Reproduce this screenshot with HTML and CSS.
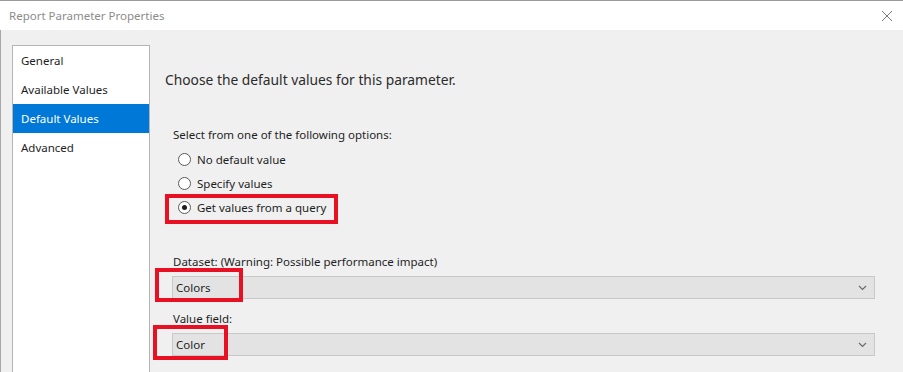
FILE: index.html
```html
<!DOCTYPE html>
<html lang="en">
<head>
  <meta charset="UTF-8" />
  <title>Report Parameter Properties</title>
  <link rel="stylesheet" href="styles.css">
</head>
<body>
  <div class="window">
    <div class="titlebar">
      <span class="title">Report Parameter Properties</span>
      <svg class="close" width="12" height="12" viewBox="0 0 12 12">
        <path d="M1 1 L11 11 M11 1 L1 11" stroke="#7a7a7a" stroke-width="1" fill="none" />
      </svg>
    </div>

    <div class="main">
      <ul class="pages">
        <li>General</li>
        <li>Available Values</li>
        <li class="active">Default Values</li>
        <li>Advanced</li>
      </ul>

      <div class="content">
        <h1>Choose the default values for this parameter.</h1>

        <div class="options">
          <p class="label">Select from one of the following options:</p>
          <label class="radio"><span class="dot"></span>No default value</label>
          <label class="radio"><span class="dot"></span>Specify values</label>
          <label class="radio"><span class="dot checked"></span>Get values from a query<span class="mark mark-radio"></span></label>
        </div>

        <div class="field first">
          <p class="label">Dataset: (Warning: Possible performance impact)</p>
          <div class="combo">
            <span>Colors</span>
            <svg class="chev" width="9" height="6" viewBox="0 0 9 6"><path d="M1 1 L4.5 4.5 L8 1" stroke="#6b6b6b" stroke-width="1.2" fill="none" /></svg>
            <span class="mark mark-dataset"></span>
          </div>
        </div>

        <div class="field">
          <p class="label">Value field:</p>
          <div class="combo">
            <span>Color</span>
            <svg class="chev" width="9" height="6" viewBox="0 0 9 6"><path d="M1 1 L4.5 4.5 L8 1" stroke="#6b6b6b" stroke-width="1.2" fill="none" /></svg>
            <span class="mark mark-value"></span>
          </div>
        </div>
      </div>
    </div>
  </div>
</body>
</html>
```

FILE: styles.css
```css
html, body {
  margin: 0;
  padding: 0;
}
body {
  width: 903px;
  height: 372px;
  overflow: hidden;
  background: #f0f0f0;
  font-family: "Noto Sans", "Open Sans", sans-serif;
  color: #1e1e1e;
}
.window {
  display: flex;
  flex-direction: column;
  height: 100%;
}
.titlebar {
  height: 29px;
  background: #fff;
  border-top: 1px solid #9b9b9b;
  display: flex;
  align-items: center;
  justify-content: space-between;
  padding: 0 10px 0 9px;
}
.title {
  font-size: 11.5px;
  color: #8c8c8c;
}
.close {
  margin-top: 1px;
}
.main {
  flex: 1;
  display: flex;
  padding-top: 15px;
  border-left: 1px solid #a8a8a8;
}
.pages {
  list-style: none;
  margin: 0 0 0 11px;
  padding: 0;
  width: 136px;
  background: #fff;
  border: 1px solid #b4b4b4;
  border-bottom: none;
  font-size: 11.5px;
}
.pages li {
  height: 29px;
  line-height: 30px;
  padding-left: 8px;
  color: #1e1e1e;
}
.pages li.active {
  background: #0078d7;
  color: #fff;
}
.content {
  flex: 1;
  padding-left: 15px;
}
h1 {
  font-size: 13.8px;
  font-weight: normal;
  color: #2b2b2b;
  margin: 25px 0 0;
  line-height: 20px;
}
.label {
  margin: 0;
  font-size: 11.5px;
  line-height: 18px;
}
.options {
  margin-top: 36px;
  padding-left: 8px;
  display: flex;
  flex-direction: column;
  align-items: flex-start;
}
.options .label {
  margin-bottom: 3px;
}
.radio {
  position: relative;
  display: flex;
  align-items: center;
  height: 24px;
  font-size: 11.5px;
  padding-left: 5px;
}
.dot {
  width: 11px;
  height: 11px;
  border: 1px solid #5a5a5a;
  border-radius: 50%;
  background: #fff;
  margin-right: 6px;
  position: relative;
}
.dot.checked::after {
  content: "";
  position: absolute;
  left: 3px;
  top: 3px;
  width: 5px;
  height: 5px;
  border-radius: 50%;
  background: #1e1e1e;
}
.field {
  margin-top: 11px;
  padding-left: 8px;
}
.field.first {
  margin-top: 34px;
}
.field .label {
  margin-bottom: 5px;
}
.combo {
  position: relative;
  margin: 0 28px 0 -1px;
  height: 21px;
  background: #e3e3e3;
  border: 1px solid #c8c8c8;
  display: flex;
  align-items: center;
  justify-content: space-between;
  padding: 0 7px 0 3px;
  font-size: 11.5px;
}
.mark {
  position: absolute;
  border: 4px solid #e81123;
  pointer-events: none;
}
.mark-radio {
  left: -8px;
  right: -12px;
  top: -1px;
  bottom: -5px;
}
.mark-dataset {
  left: -18px;
  top: -9px;
  width: 80px;
  height: 26px;
}
.mark-value {
  left: -20px;
  top: -9px;
  width: 67px;
  height: 27px;
}
```
